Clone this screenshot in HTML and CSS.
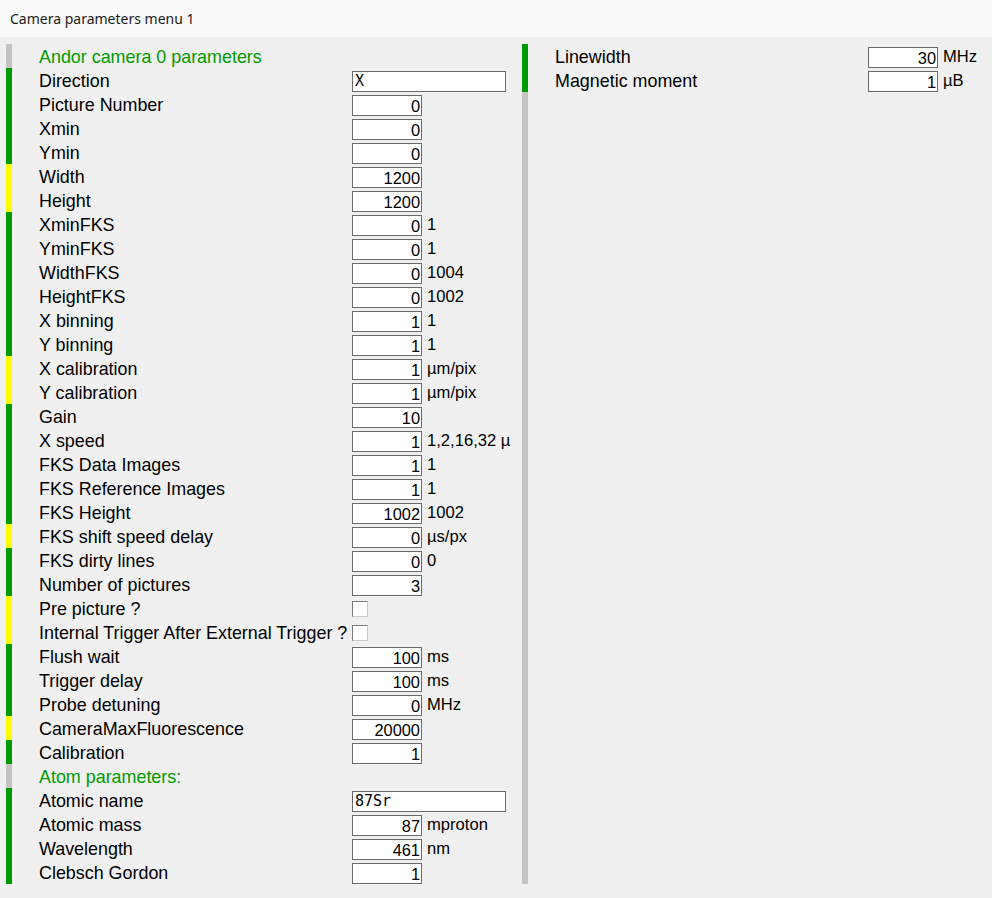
FILE: index.html
```html
<!DOCTYPE html>
<html>
<head>
<meta charset="utf-8">
<link rel="stylesheet" href="styles.css">
</head>
<body>
<div class="titlebar">Camera parameters menu 1</div>
<div class="main">
  <div class="panel left">
    <div class="row"><span class="ind gray"></span><span class="label head">Andor camera 0 parameters</span></div>
    <div class="row"><span class="ind green"></span><span class="label">Direction</span><span class="entry text">X</span></div>
    <div class="row"><span class="ind green"></span><span class="label">Picture Number</span><span class="entry">0</span></div>
    <div class="row"><span class="ind green"></span><span class="label">Xmin</span><span class="entry">0</span></div>
    <div class="row"><span class="ind green"></span><span class="label">Ymin</span><span class="entry">0</span></div>
    <div class="row"><span class="ind yellow"></span><span class="label">Width</span><span class="entry">1200</span></div>
    <div class="row"><span class="ind yellow"></span><span class="label">Height</span><span class="entry">1200</span></div>
    <div class="row"><span class="ind green"></span><span class="label">XminFKS</span><span class="entry">0</span><span class="unit">1</span></div>
    <div class="row"><span class="ind green"></span><span class="label">YminFKS</span><span class="entry">0</span><span class="unit">1</span></div>
    <div class="row"><span class="ind green"></span><span class="label">WidthFKS</span><span class="entry">0</span><span class="unit">1004</span></div>
    <div class="row"><span class="ind green"></span><span class="label">HeightFKS</span><span class="entry">0</span><span class="unit">1002</span></div>
    <div class="row"><span class="ind green"></span><span class="label">X binning</span><span class="entry">1</span><span class="unit">1</span></div>
    <div class="row"><span class="ind green"></span><span class="label">Y binning</span><span class="entry">1</span><span class="unit">1</span></div>
    <div class="row"><span class="ind yellow"></span><span class="label">X calibration</span><span class="entry">1</span><span class="unit">µm/pix</span></div>
    <div class="row"><span class="ind yellow"></span><span class="label">Y calibration</span><span class="entry">1</span><span class="unit">µm/pix</span></div>
    <div class="row"><span class="ind green"></span><span class="label">Gain</span><span class="entry">10</span></div>
    <div class="row"><span class="ind green"></span><span class="label">X speed</span><span class="entry">1</span><span class="unit">1,2,16,32 µ</span></div>
    <div class="row"><span class="ind green"></span><span class="label">FKS Data Images</span><span class="entry">1</span><span class="unit">1</span></div>
    <div class="row"><span class="ind green"></span><span class="label">FKS Reference Images</span><span class="entry">1</span><span class="unit">1</span></div>
    <div class="row"><span class="ind green"></span><span class="label">FKS Height</span><span class="entry">1002</span><span class="unit">1002</span></div>
    <div class="row"><span class="ind yellow"></span><span class="label">FKS shift speed delay</span><span class="entry">0</span><span class="unit">µs/px</span></div>
    <div class="row"><span class="ind green"></span><span class="label">FKS dirty lines</span><span class="entry">0</span><span class="unit">0</span></div>
    <div class="row"><span class="ind green"></span><span class="label">Number of pictures</span><span class="entry">3</span></div>
    <div class="row"><span class="ind yellow"></span><span class="label">Pre picture ?</span><span class="check"></span></div>
    <div class="row"><span class="ind yellow"></span><span class="label">Internal Trigger After External Trigger ?</span><span class="check"></span></div>
    <div class="row"><span class="ind green"></span><span class="label">Flush wait</span><span class="entry">100</span><span class="unit">ms</span></div>
    <div class="row"><span class="ind green"></span><span class="label">Trigger delay</span><span class="entry">100</span><span class="unit">ms</span></div>
    <div class="row"><span class="ind green"></span><span class="label">Probe detuning</span><span class="entry">0</span><span class="unit">MHz</span></div>
    <div class="row"><span class="ind yellow"></span><span class="label">CameraMaxFluorescence</span><span class="entry">20000</span></div>
    <div class="row"><span class="ind green"></span><span class="label">Calibration</span><span class="entry">1</span></div>
    <div class="row"><span class="ind gray"></span><span class="label head">Atom parameters:</span></div>
    <div class="row"><span class="ind green"></span><span class="label">Atomic name</span><span class="entry text">87Sr</span></div>
    <div class="row"><span class="ind green"></span><span class="label">Atomic mass</span><span class="entry">87</span><span class="unit">mproton</span></div>
    <div class="row"><span class="ind green"></span><span class="label">Wavelength</span><span class="entry">461</span><span class="unit">nm</span></div>
    <div class="row"><span class="ind green"></span><span class="label">Clebsch Gordon</span><span class="entry">1</span></div>
  </div>
  <div class="panel right">
    <div class="rows">
      <div class="row"><span class="ind green"></span><span class="label">Linewidth</span><span class="entry">30</span><span class="unit">MHz</span></div>
      <div class="row"><span class="ind green"></span><span class="label">Magnetic moment</span><span class="entry">1</span><span class="unit">µB</span></div>
    </div>
    <div class="rest"></div>
  </div>
</div>
</body>
</html>
```
FILE: styles.css
```css
html, body {
  margin: 0;
  padding: 0;
  background: #f0f0f0;
}
body {
  width: 992px;
  height: 898px;
  overflow: hidden;
  font-family: "Liberation Sans", Arial, sans-serif;
}
.titlebar {
  height: 37px;
  background: #f9f9f9;
  font-family: "Noto Sans", "Open Sans", sans-serif;
  font-size: 14px;
  line-height: 38px;
  padding-left: 10px;
  color: #1a1a1a;
  box-sizing: border-box;
}
.main {
  display: flex;
  padding-top: 7px;
}
.panel.left {
  margin-left: 6px;
  width: 516px;
}
.panel.right {
  display: flex;
  flex-direction: column;
  width: 470px;
}
.rest {
  width: 6px;
  height: 792px;
  background: #c4c4c4;
}
.row {
  display: flex;
  height: 24px;
  align-items: stretch;
}
.ind {
  width: 6px;
  flex: none;
}
.ind.gray { background: #c4c4c4; }
.ind.green { background: #009b00; }
.ind.yellow { background: #ffff00; }
.label {
  box-sizing: border-box;
  width: 313px;
  margin-left: 27px;
  flex: none;
  font-size: 17.9px;
  line-height: 24px;
  padding-top: 1px;
  color: #000;
  white-space: nowrap;
  overflow: hidden;
}
.label.head {
  color: #009b00;
}
.entry {
  flex: none;
  box-sizing: border-box;
  width: 70px;
  height: 21px;
  margin-top: 3px;
  background: #fff;
  border: 1px solid #6a6a6a;
  font-family: "Liberation Sans", Arial, sans-serif;
  font-size: 16.4px;
  line-height: 20px;
  text-align: right;
  padding-right: 1px;
  color: #000;
}
.entry.text {
  width: 154px;
  text-align: left;
  padding-left: 2px;
  font-family: "DejaVu Sans Mono", "Liberation Mono", monospace;
  font-size: 15px;
  line-height: 19px;
}
.unit {
  margin-left: 5px;
  font-size: 16.6px;
  line-height: 24px;
  padding-top: 1px;
  white-space: nowrap;
}
.check {
  flex: none;
  box-sizing: border-box;
  width: 16px;
  height: 16px;
  margin-top: 5px;
  background: #fff;
  border: 1px solid #7a7a7a;
  border-right-color: #c8c8c8;
  border-bottom-color: #c8c8c8;
}
```
